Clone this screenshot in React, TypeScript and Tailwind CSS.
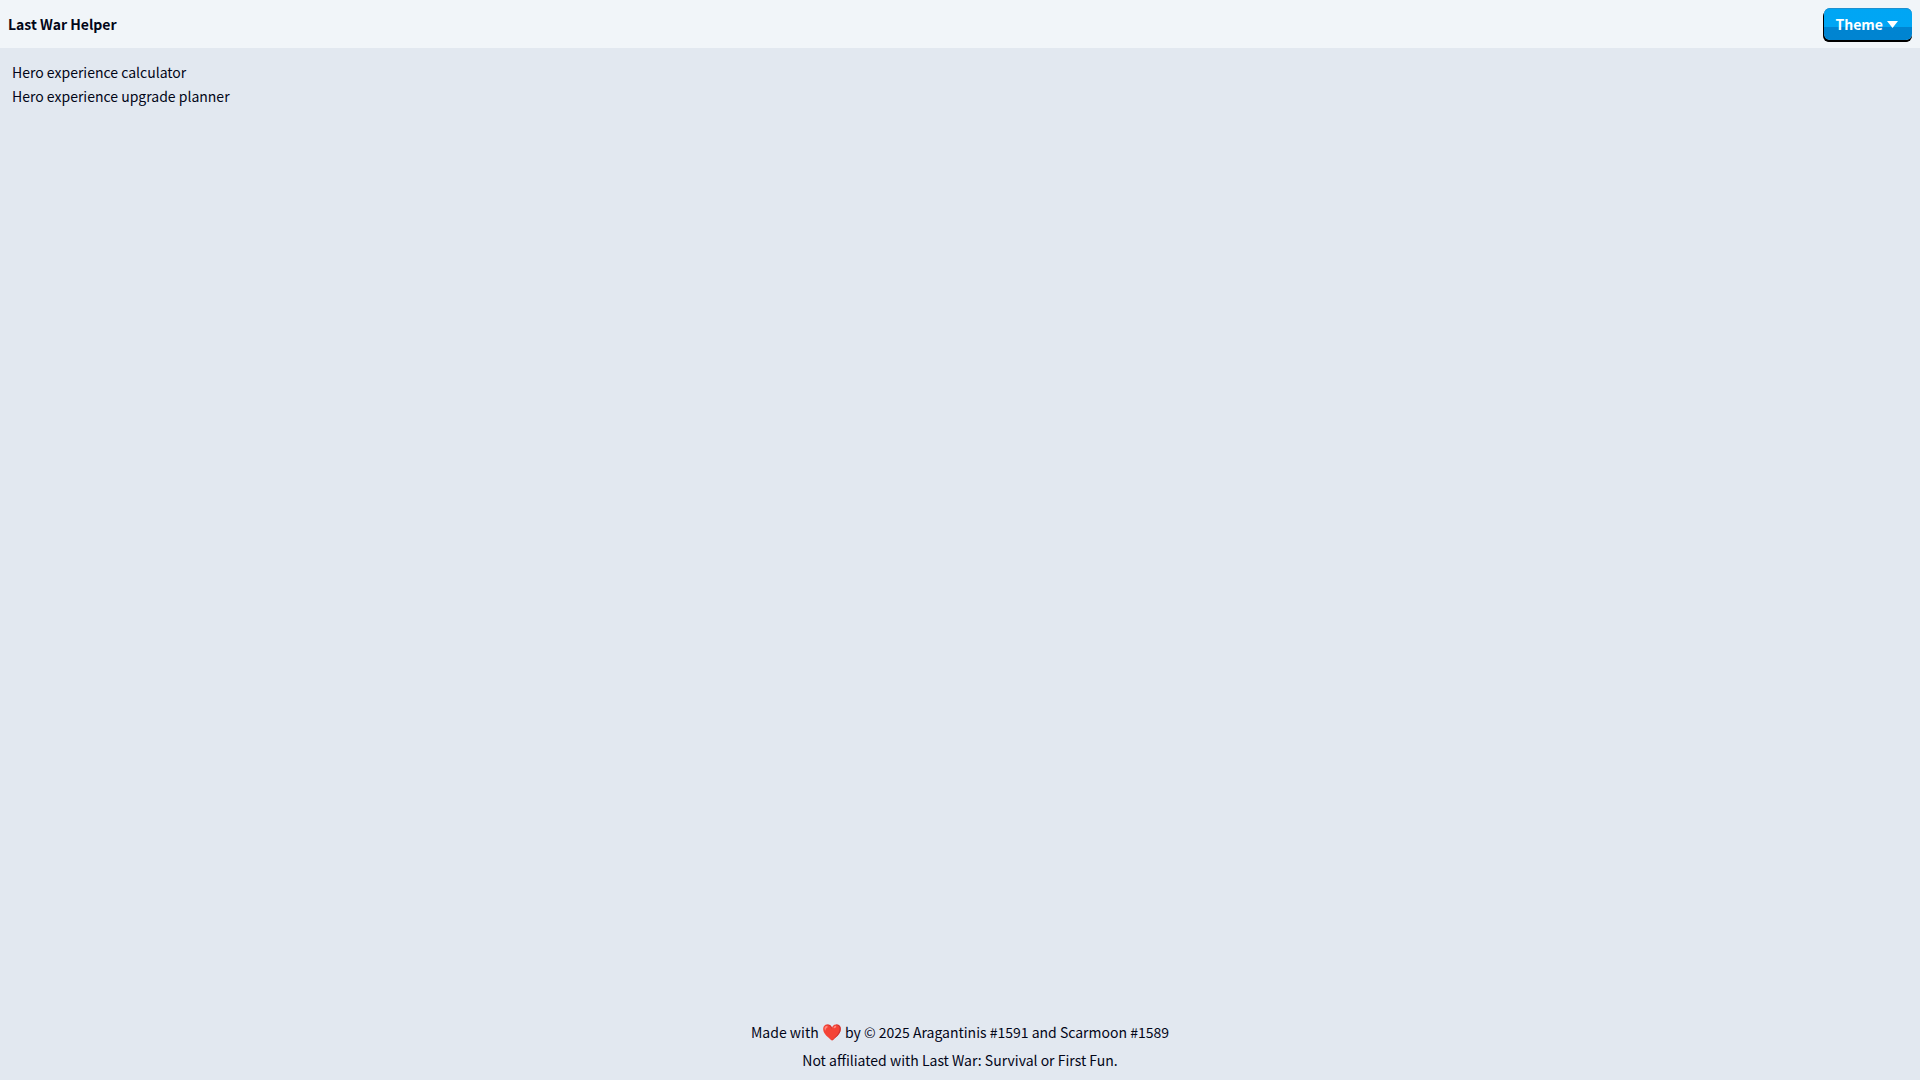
import { FunctionComponent, useState } from "react";

interface ToolLink {
    href: string;
    label: string;
}

const links: ToolLink[] = [
    { href: "#calculator", label: "Hero experience calculator" },
    { href: "#planner", label: "Hero experience upgrade planner" },
];

const Header: FunctionComponent = () => {
    const [isOpen, setIsOpen] = useState<boolean>(false);

    return (
        <header className="flex h-12 items-center justify-between bg-slate-100 px-2">
            <a href="#home" className="font-bold">
                Last War Helper
            </a>
            <button
                type="button"
                aria-expanded={isOpen}
                onClick={() => setIsOpen(!isOpen)}
                className="flex h-8 items-center gap-1 rounded-md bg-linear-to-b from-sky-500 from-60% to-sky-600 to-60% pr-3.5 pl-3 font-bold text-white shadow-[-1px_2px_0_#000,0_2px_0_#000,inset_0_1px_0_#1e90d0]">
                Theme
                <svg width="11" height="7" viewBox="0 0 11 7" fill="currentColor" aria-hidden="true">
                    <path d="M0 0h11L5.5 7z" />
                </svg>
            </button>
        </header>
    );
};

const App: FunctionComponent = () => {
    return (
        <div className="flex min-h-screen flex-col bg-slate-200 font-['Noto_Sans_CJK_SC',sans-serif] text-sm/6 text-slate-950">
            <Header />
            <main className="flex-1 p-3">
                <ul>
                    {links.map((link) => (
                        <li key={link.href}>
                            <a href={link.href} className="block">
                                {link.label}
                            </a>
                        </li>
                    ))}
                </ul>
            </main>
            <footer className="flex flex-col items-center gap-1 p-2 text-center">
                <p>
                    Made with <span className="text-base/6">❤️</span> by © 2025 Aragantinis #1591 and Scarmoon #1589
                </p>
                <p>Not affiliated with Last War: Survival or First Fun.</p>
            </footer>
        </div>
    );
};

export default App;
